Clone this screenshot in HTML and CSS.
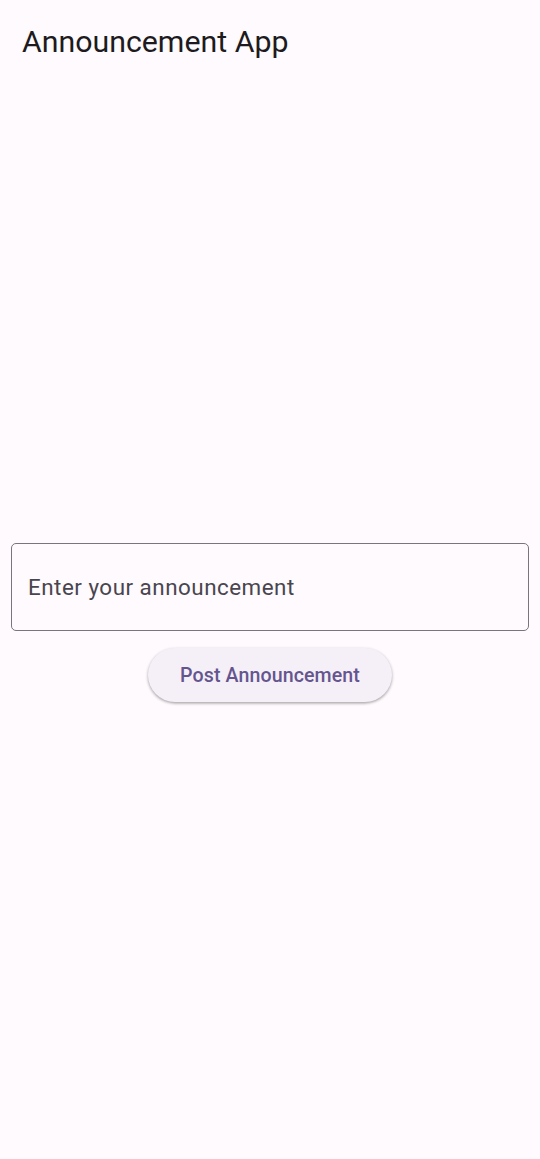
FILE: index.html
```html
<!DOCTYPE html>
<html lang="en">
<head>
<meta charset="utf-8">
<title>Announcement App</title>
<link rel="stylesheet" href="styles.css">
</head>
<body>
<header class="app-bar">
  <h1 class="app-title">Announcement App</h1>
</header>
<main class="content">
  <div class="form">
    <label class="field">
      <input class="field-input" type="text" placeholder="Enter your announcement">
    </label>
    <button class="post-btn" type="button">Post Announcement</button>
  </div>
</main>
</body>
</html>
```
FILE: styles.css
```css
* { box-sizing: border-box; }
html, body { margin: 0; padding: 0; }
body {
  background: #fefafd;
  font-family: Roboto, "Noto Sans", sans-serif;
  width: 540px;
  height: 1159px;
  overflow: hidden;
}
.app-bar {
  height: 90px;
  display: flex;
  align-items: center;
  padding-left: 22px;
}
.app-title {
  margin: 0;
  font-size: 30.3px;
  font-weight: 400;
  color: #1d1b20;
  line-height: 1;
  position: relative;
  top: -3px;
}
.content {
  height: 1069px;
  display: flex;
  align-items: center;
  padding: 0 11px 4px;
}
.form {
  width: 100%;
  display: flex;
  flex-direction: column;
  align-items: center;
  gap: 17px;
}
.field { display: block; width: 100%; }
.field-input {
  display: block;
  width: 100%;
  height: 88px;
  border: 1.3px solid #79747e;
  border-radius: 5px;
  background: transparent;
  padding: 0 16px;
  font-family: Roboto, sans-serif;
  font-size: 22.4px;
  color: #1d1b20;
  outline: none;
}
.field-input::placeholder { color: #49454f; opacity: 1; letter-spacing: 0.5px; }
.post-btn {
  height: 54px;
  padding: 0 32px;
  border: none;
  border-radius: 27px;
  background: #f5f0f7;
  color: #65558f;
  font-family: Roboto, sans-serif;
  font-size: 19.6px;
  font-weight: 500;
  letter-spacing: 0.1px;
  box-shadow: 0 1.4px 2.5px rgba(0,0,0,0.25), 0 1px 3px 1px rgba(0,0,0,0.08);
}
```
